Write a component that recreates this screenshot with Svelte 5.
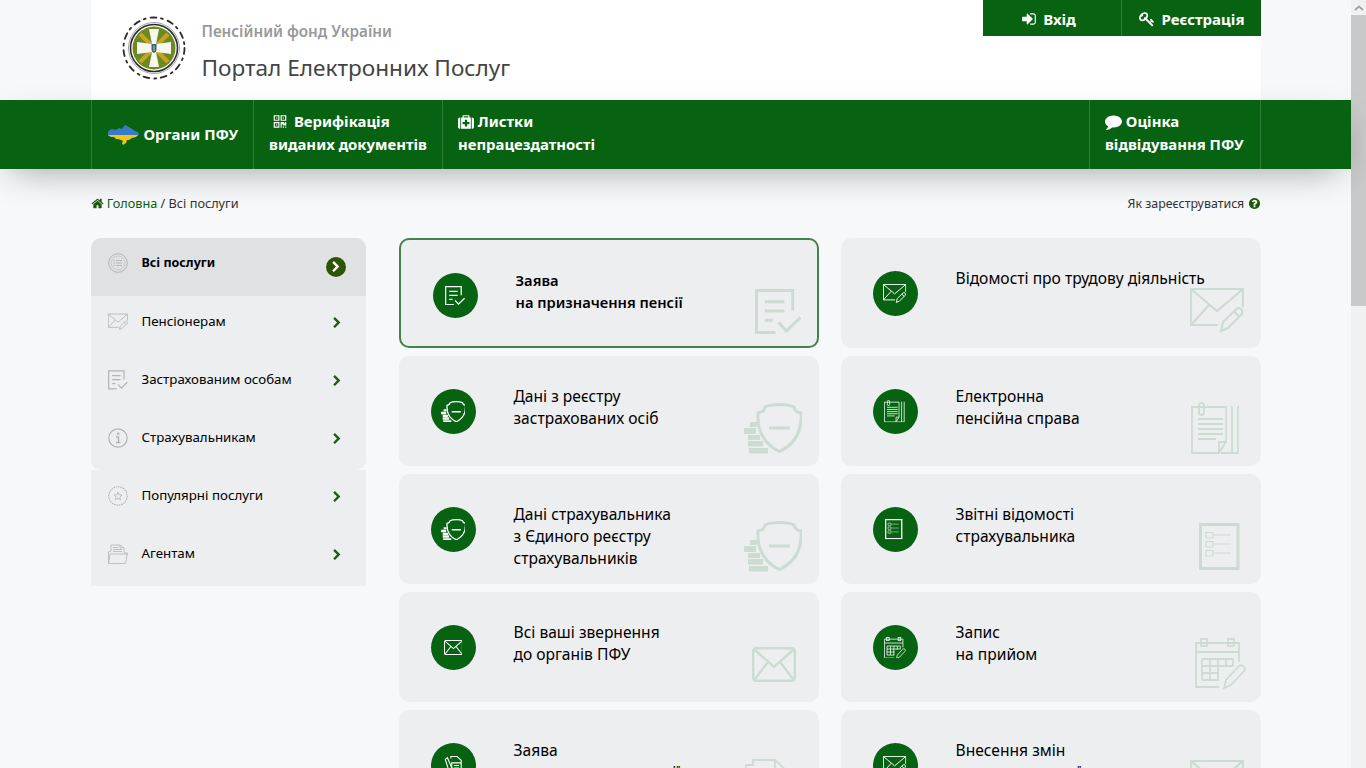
<script>
  const navItems = [
    { icon: 'map', lines: ['Органи ПФУ'], single: true },
    { icon: 'fa-qr', lines: ['Верифікація', 'виданих документів'], cls: 'qr' },
    { icon: 'fa-med', lines: ['Листки', 'непрацездатності'], cls: 'med' }
  ];

  const sideGroups = [
    [
      { icon: 'list', label: 'Всі послуги', active: true },
      { icon: 'mailpen', label: 'Пенсіонерам' },
      { icon: 'doc', label: 'Застрахованим особам' },
      { icon: 'info', label: 'Страхувальникам' }
    ],
    [
      { icon: 'star', label: 'Популярні послуги' },
      { icon: 'folder', label: 'Агентам' }
    ]
  ];

  // w/h/r/b = size of the pale icon and its distance from the card's right and bottom edge
  const cards = [
    { icon: 'doc', w: 47, h: 46, r: 15, b: 11, lines: ['Заява', 'на призначення пенсії'], active: true },
    { icon: 'mailpen', w: 54, h: 45, r: 17, b: 15, lines: ['Відомості про трудову діяльність'] },
    { icon: 'shield', w: 58, h: 51, r: 17, b: 12, lines: ['Дані з реєстру', 'застрахованих осіб'] },
    { icon: 'paper', w: 49, h: 52, r: 21, b: 12, lines: ['Електронна', 'пенсійна справа'] },
    { icon: 'shield', w: 58, h: 51, r: 17, b: 12, lines: ['Дані страхувальника', 'з Єдиного реєстру', 'страхувальників'] },
    { icon: 'check', w: 46, h: 47, r: 16, b: 14, lines: ['Звітні відомості', 'страхувальника'] },
    { icon: 'mail', w: 44, h: 35, r: 23, b: 20, lines: ['Всі ваші звернення', 'до органів ПФУ'] },
    { icon: 'cal', w: 51, h: 51, r: 15, b: 13, lines: ['Запис', 'на прийом'] },
    { icon: 'draft', badge: 'draft-badge', w: 44, h: 46, r: 30, b: 15, lines: ['Заява', 'на перерахунок пенсії'] },
    { icon: 'mailpen', w: 54, h: 45, r: 17, b: 15, lines: ['Внесення змін', 'до персональної картки'] }
  ];

  const BADGE_SCALE = 0.43;
</script>

<!-- icon sprite -->
<svg class="sprite" aria-hidden="true">
  <symbol id="fa-chevron" viewBox="0 0 1792 1792"><path fill="currentColor" d="M1363 877l-742 742q-19 19-45 19t-45-19l-166-166q-19-19-19-45t19-45l531-531-531-531q-19-19-19-45t19-45l166-166q19-19 45-19t45 19l742 742q19 19 19 45t-19 45z"/></symbol>
  <symbol id="fa-comment" viewBox="0 0 1792 1792"><path fill="currentColor" d="M1792 896q0 174-120 321.5t-326 233-450 85.5q-70 0-145-8-198 175-460 242-49 14-114 22-17 2-30.5-9t-17.5-29v-1q-3-4-.5-12t2-10 4.5-9.5l6-9 7-8.5 8-9q7-8 31-34.5t34.5-38 31-39.5 32.5-51 27-59 26-76q-157-89-247.5-220t-90.5-281q0-130 71-248.5t191-204.5 286-136.5 348-50.5q244 0 450 85.5t326 233 120 321.5z"/></symbol>
  <symbol id="fa-signin" viewBox="0 0 1792 1792"><path fill="currentColor" d="M1312 896q0 26-19 45l-544 544q-19 19-45 19t-45-19-19-45v-288h-448q-26 0-45-19t-19-45v-384q0-26 19-45t45-19h448v-288q0-26 19-45t45-19 45 19l544 544q19 19 19 45zm352-352v704q0 119-84.5 203.5t-203.5 84.5h-320q-13 0-22.5-9.5t-9.5-22.5q0-4-1-20t-.5-26.5 3-23.5 10-19.5 20.5-6.5h320q66 0 113-47t47-113v-704q0-66-47-113t-113-47h-312l-11.5-1-11.5-3-8-5.5-7-9-2-13.5q0-4-1-20t-.5-26.5 3-23.5 10-19.5 20.5-6.5h320q119 0 203.5 84.5t84.5 203.5z"/></symbol>
  <symbol id="fa-help" viewBox="0 0 1792 1792"><path fill="currentColor" d="M1024 1376v-192q0-14-9-23t-23-9h-192q-14 0-23 9t-9 23v192q0 14 9 23t23 9h192q14 0 23-9t9-23zm256-672q0-88-55.500-163t-138.500-116-170-41q-243 0-371 213-15 24 8 42l132 100q7 6 19 6 16 0 25-12 53-68 86-92 34-24 86-24 48 0 85.500 26t37.500 59q0 38-20 61t-68 45q-63 28-115.500 86.500t-52.500 125.500v36q0 14 9 23t23 9h192q14 0 23-9t9-23q0-19 21.500-49.500t54.500-49.500q32-18 49-28.500t46-35 44.500-48 28-60.500 12.500-81zm384 192q0 209-103 385.500t-279.500 279.500-385.500 103-385.500-103-279.500-279.500-103-385.500 103-385.500 279.500-279.500 385.500-103 385.500 103 279.500 279.500 103 385.500z"/></symbol>
  <symbol id="fa-home" viewBox="0 0 1792 1792"><path fill="currentColor" d="M1472 992v480q0 26-19 45t-45 19h-384v-384h-256v384h-384q-26 0-45-19t-19-45v-480q0-1 .5-3t.5-3l575-474 575 474q1 2 1 6zm223-69l-62 74q-8 9-21 11h-3q-13 0-21-7l-692-577-692 577q-12 8-24 7-13-2-21-11l-62-74q-8-10-7-23.500t11-21.500l719-599q32-26 76-26t76 26l244 204v-195q0-14 9-23t23-9h192q14 0 23 9t9 23v408l219 182q10 8 11 21.500t-7 23.500z"/></symbol>
  <symbol id="fa-key" viewBox="0 0 1792 1792"><path fill="currentColor" d="M832 512q0-80-56-136t-136-56-136 56-56 136q0 42 19 83-41-19-83-19-80 0-136 56t-56 136 56 136 136 56 136-56 56-136q0-42-19-83 41 19 83 19 80 0 136-56t56-136zm851 704q0 17-49 66t-66 49q-9 0-28.500-16t-36.500-33-38.500-40-24.500-26l-96 96 220 220q28 28 28 68 0 42-39 81t-81 39q-40 0-68-28l-671-671q-176 131-365 131-163 0-265.500-102.500t-102.500-265.500q0-160 95-313t248-248 313-95q163 0 265.500 102.500t102.500 265.500q0 189-131 365l355 355 96-96q-3-3-26-24.500t-40-38.500-33-36.500-16-28.500q0-17 49-66t66-49q13 0 23 10 6 6 46 44.500t82 79.500 86.500 86 73 78 28.500 41z"/></symbol>
  <symbol id="fa-med" viewBox="0 0 1792 1792"><path fill="currentColor" d="M1280 1120v-192q0-14-9-23t-23-9h-224v-224q0-14-9-23t-23-9h-192q-14 0-23 9t-9 23v224h-224q-14 0-23 9t-9 23v192q0 14 9 23t23 9h224v224q0 14 9 23t23 9h192q14 0 23-9t9-23v-224h224q14 0 23-9t9-23zm-640-736h512v-128h-512v128zm-384 0v1280h-32q-92 0-158-66t-66-158v-832q0-92 66-158t158-66h32zm1184 0v1280h-1088v-1280h160v-160q0-40 28-68t68-28h576q40 0 68 28t28 68v160h160zm352 224v832q0 92-66 158t-158 66h-32v-1280h32q92 0 158 66t66 158z"/></symbol>
  <symbol id="fa-qr" viewBox="0 0 1792 1792"><path fill="currentColor" d="M576 1152v128h-128v-128h128zm0-768v128h-128v-128h128zm768 0v128h-128v-128h128zm-1024 1023h384v-383h-384v383zm0-767h384v-384h-384v384zm768 0h384v-384h-384v384zm-256 256v640h-640v-640h640zm512 512v128h-128v-128h128zm256 0v128h-128v-128h128zm0-512v384h-384v-128h-128v384h-128v-640h384v128h128v-128h128zm-768-768v640h-640v-640h640zm768 0v640h-640v-640h640z"/></symbol>

  <symbol id="map" viewBox="0 0 31 23">
    <path fill="#3a7bc8" d="M0 9l3-3 5 1 3-2 3 1 3-4 4 2 3 2 3 2 3 1 1 3-2 1H0z"/>
    <path fill="#f2c618" d="M0 12h30l-2 2-4 1-3 2-2 0-1 3-3 2-1-2 1-2-2-1-3-1-2 0-2-2-3 0z"/>
  </symbol>

  <!-- line icons, drawn with currentColor so they work white, grey and pale green -->
  <symbol id="doc" viewBox="0 0 48 47">
    <g fill="none" stroke="currentColor" stroke-width="3">
      <path d="M21 44.500H1.500V1.500H38.500V22"/>
      <path d="M10 13H30M10 22.500H30M10 32H18"/>
      <path d="M24 34L32 43L46.500 29"/>
    </g>
  </symbol>
  <symbol id="mailpen" viewBox="0 0 54 45">
    <g fill="none" stroke="currentColor" stroke-width="2.200">
      <path d="M28 37H1V1H53V19"/>
      <path d="M1 1L27 23L53 1M1 37L19 17"/>
      <path d="M31 43L33 34L47 20.500Q49 19 51 21T52 26L38 40Z"/>
      <path d="M44 23.500L49.500 29"/>
    </g>
  </symbol>
  <symbol id="shield" viewBox="0 0 58 51">
    <g fill="none" stroke="currentColor" stroke-width="3">
      <path d="M35.500 1.500C42 1.500 48 3 50 4C50.500 7 53 9.500 57 10C58 25 53 40 35.500 48.500C18 40 13 25 14 10C18 9.500 20.500 7 21 4C23 3 29 1.500 35.500 1.500Z"/>
      <path d="M25 25H46"/>
    </g>
    <path fill="currentColor" d="M6 19H13V24H6ZM0 25H12V31H0ZM4 32H16V37H4ZM4 38H19V43.500H4ZM5 45H24V50.500H5Z"/>
  </symbol>
  <symbol id="paper" viewBox="0 0 49 52">
    <g fill="none" stroke="currentColor" stroke-width="1.800">
      <path d="M1 5H35V40L28 51H1Z"/>
      <path d="M28 51V40H35"/>
      <path d="M41 4V51H30M47 4V51H41"/>
      <path d="M8 10V3Q8 1 10.500 1T13 3V10Q13 13 10.500 13T8 10"/>
      <path d="M7 17H32M7 22H32M7 27H32M7 32H32M7 37H25"/>
    </g>
  </symbol>
  <symbol id="check" viewBox="0 0 46 47">
    <g fill="none" stroke="currentColor">
      <path stroke-width="3" d="M1.500 45.500V1.500H39V45.500Z"/>
      <path stroke-width="1.200" d="M7 9.500H14V15H7ZM7 18.500H14V24H7ZM7 27.500H14V33H7Z"/>
      <path stroke-width="1" d="M15 12H32M15 21H32M15 30H32"/>
    </g>
  </symbol>
  <symbol id="mail" viewBox="0 0 44 35">
    <g fill="none" stroke="currentColor" stroke-width="2.400">
      <rect x="1.200" y="1.200" width="41.600" height="32.600" rx="3"/>
      <path d="M3 3L22 20L41 3M3 32L16 15M41 32L28 15"/>
    </g>
  </symbol>
  <symbol id="cal" viewBox="0 0 51 51">
    <g fill="none" stroke="currentColor" stroke-width="1.800">
      <path d="M24 49H1V5H44V24"/>
      <path d="M1 14H44"/>
      <rect x="6" y="1" width="6" height="7"/>
      <rect x="33" y="1" width="6" height="7"/>
      <path d="M7 21H31M7 28H38M7 35H24M7 42H24M15 21V42M23 21V42M31 21V29M38 21V28M7 21V42M38 21H31"/>
      <path d="M29 50L31 42L44 28Q46 26 48.500 28.500T49 33L36 47Z"/>
    </g>
  </symbol>
  <symbol id="draft" viewBox="0 0 44 46">
    <g fill="none" stroke="currentColor" stroke-width="1.800">
      <path d="M1 6H8V1H30L42 12V45H1Z"/>
      <path d="M30 1V12H42"/>
    </g>
  </symbol>
  <symbol id="draft-badge" viewBox="0 0 44 46">
    <g fill="none" stroke="currentColor" stroke-width="2.600">
      <path d="M16 6V1H30L40 10V45H18V16H40"/>
      <path d="M23 22H35M23 28H35M23 34H35"/>
      <path d="M3 8L8 4L20 32L20 42L12 36Z"/>
    </g>
  </symbol>
  <symbol id="list" viewBox="0 0 20 20">
    <g fill="none" stroke="currentColor">
      <circle cx="10" cy="10" r="9.300" stroke-width="1"/>
      <circle cx="10" cy="10" r="7" stroke-width=".5"/>
      <path d="M8 7.500H14M8 10H14M8 12.500H14M5.500 7.500H7M5.500 10H7M5.500 12.500H7" stroke-width=".9"/>
    </g>
  </symbol>
  <symbol id="info" viewBox="0 0 20 20">
    <g fill="none" stroke="currentColor">
      <circle cx="10" cy="10" r="9.200" stroke-width="1.200"/>
      <path d="M8 9H10.500V14.500M8 14.500H12.500" stroke-width="1.400"/>
      <path d="M9.500 5H11V6.500H9.500Z" stroke-width="1"/>
    </g>
  </symbol>
  <symbol id="star" viewBox="0 0 20 20">
    <g fill="none" stroke="currentColor">
      <circle cx="10" cy="10" r="9.200" stroke-width="1.100" stroke-dasharray="1.600 .8"/>
      <path d="M10 6L11.200 8.800L14 9L11.900 10.900L12.500 13.800L10 12.300L7.500 13.800L8.100 10.900L6 9L8.800 8.800Z" stroke-width=".8"/>
    </g>
  </symbol>
  <symbol id="folder" viewBox="0 0 20 20">
    <g fill="none" stroke="currentColor" stroke-width=".8">
      <path d="M.5 19.500V8L3 7V1H12L16 4V9H19.500L17.500 19.500Z"/>
      <path d="M.5 19.500L2 10H19.500M12 1V4H16M5 3.500H10M5 5.500H14M5 7.500H14"/>
    </g>
  </symbol>
</svg>

<div class="shell">
  <div class="page">
    <header class="header">
      <div class="brand">
        <svg class="logo" viewBox="0 0 66 66" aria-hidden="true">
          <g fill="none" stroke="#2b2b2b" stroke-linecap="round">
            <circle cx="33" cy="33" r="30.500" stroke-width="1.800" stroke-dasharray="6 4.500 2 5"/>
            <circle cx="33" cy="33" r="23.500" stroke-width="1.600"/>
            <circle cx="33" cy="33" r="25.500" stroke-width=".8" stroke="#8a8a8a"/>
          </g>
          <circle cx="33" cy="33" r="21.500" fill="#6d8a1f"/>
          <path d="M19 19L47 47M47 19L19 47" stroke="#c9a227" stroke-width="4"/>
          <path fill="#f7f6ef" d="M28 14H38L35 29L50 27V39L35 37L38 52H28L31 37L16 39V27L31 29Z"/>
          <path fill="#2f5f9e" d="M30.500 29H35.500V35Q35.500 37 33 38Q30.500 37 30.500 35Z"/>
          <path fill="#e0c030" d="M32.400 30.500H33.600V36H32.400Z"/>
        </svg>
        <div class="brand-text">
          <span class="org">Пенсійний фонд України</span>
          <span class="portal">Портал Електронних Послуг</span>
        </div>
      </div>
      <div class="auth">
        <a class="auth-link login"><svg class="fa"><use href="#fa-signin"/></svg> Вхід</a>
        <a class="auth-link register"><svg class="fa"><use href="#fa-key"/></svg> Реєстрація</a>
      </div>
    </header>

    <nav class="nav">
      <div class="nav-inner">
        {#each navItems as item}
          <a class="nav-item" class:single={item.single}>
            {#if item.single}
              <svg class="map"><use href="#map"/></svg>
              <span>{item.lines[0]}</span>
            {:else}
              <span class="nav-line"><svg class="fa {item.cls}"><use href={'#' + item.icon}/></svg> {item.lines[0]}</span>
              <span class="nav-line">{item.lines[1]}</span>
            {/if}
          </a>
        {/each}
        <a class="nav-item last">
          <span class="nav-line"><svg class="fa comment"><use href="#fa-comment"/></svg> Оцінка</span>
          <span class="nav-line">відвідування ПФУ</span>
        </a>
      </div>
    </nav>

    <div class="content">
      <div class="crumbs">
        <div>
          <svg class="fa home"><use href="#fa-home"/></svg>
          <a class="crumb-home">Головна</a> / Всі послуги
        </div>
        <div class="howto">Як зареєструватися <svg class="fa help"><use href="#fa-help"/></svg></div>
      </div>

      <div class="columns">
        <aside class="sidebar">
          {#each sideGroups as group, g}
            <ul class="side-group" class:first={g === 0}>
              {#each group as item}
                <li class="side-item" class:active={item.active}>
                  <svg class="side-icon"><use href={'#' + item.icon}/></svg>
                  <span class="side-label">{item.label}</span>
                  <span class="side-arrow"><svg><use href="#fa-chevron"/></svg></span>
                </li>
              {/each}
            </ul>
          {/each}
        </aside>

        <main class="cards">
          {#each cards as card}
            <a class="card" class:active={card.active}>
              <span class="badge">
                <svg style="width:{card.w * BADGE_SCALE}px;height:{card.h * BADGE_SCALE}px"><use href={'#' + (card.badge ?? card.icon)}/></svg>
              </span>
              <span class="card-text">
                {#each card.lines as line}
                  <span class="card-line">{line}</span>
                {/each}
              </span>
              <svg class="ghost" style="width:{card.w}px;height:{card.h}px;right:{card.r}px;bottom:{card.b}px"><use href={'#' + card.icon}/></svg>
            </a>
          {/each}
        </main>
      </div>
    </div>
  </div>

  <!-- screenshot shows a classic scrollbar -->
  <div class="scrollbar">
    <div class="sb-arrow">
      <svg viewBox="0 0 10 6"><path d="M1 5L5 1.500L9 5" fill="none" stroke="#a3a3a3" stroke-width="1.800"/></svg>
    </div>
    <div class="sb-thumb"></div>
  </div>
</div>

<style>
  :global(body) {
    margin: 0;
    background: #f7f8fa;
    font-family: "Noto Sans", "Open Sans", sans-serif;
    color: #000;
  }

  .sprite {
    display: none;
  }

  .shell {
    display: flex;
    height: 100vh;
    overflow: hidden;
  }

  .page {
    flex: 1;
    min-width: 0;
  }

  .scrollbar {
    width: 15px;
    background: #f1f1f1;
    flex-shrink: 0;
  }

  .sb-arrow {
    height: 15px;
    display: flex;
    align-items: center;
    justify-content: center;
  }

  .sb-arrow svg {
    width: 10px;
    height: 6px;
  }

  .sb-thumb {
    height: 291px;
    background: #c9c9c9;
  }

  .fa {
    width: 16px;
    height: 16px;
    fill: currentColor;
    vertical-align: -3px;
  }

  /* Header */
  .header {
    width: 1170px;
    height: 100px;
    margin: 0 auto;
    background: #fff;
    display: flex;
    justify-content: space-between;
    align-items: flex-start;
  }

  .brand {
    display: flex;
    padding: 15px 0 0 30px;
  }

  .logo {
    width: 66px;
    height: 66px;
  }

  .brand-text {
    display: flex;
    flex-direction: column;
    margin-left: 15px;
  }

  .org {
    font-size: 15.200px;
    font-weight: 600;
    line-height: 20px;
    margin-top: 6px;
    color: #999;
  }

  .portal {
    font-size: 22.600px;
    line-height: 30px;
    margin-top: 12px;
    color: #444;
  }

  .auth {
    display: flex;
    background: #076312;
    height: 36px;
    color: #fff;
    font-weight: 700;
    font-size: 15px;
  }

  .auth-link {
    display: flex;
    align-items: center;
    justify-content: center;
    gap: 6px;
    padding-top: 1px;
  }

  .login {
    box-sizing: border-box;
    width: 138px;
    padding-right: 6px;
  }

  .register {
    box-sizing: border-box;
    width: 140px;
    padding-left: 2px;
    border-left: 1px solid #2f7d38;
  }

  /* Green nav */
  .nav {
    position: relative;
    background: #076312;
    box-shadow: 0 12px 36px -12px rgba(0, 0, 0, 0.38);
  }

  .nav-inner {
    width: 1170px;
    height: 69px;
    margin: 0 auto;
    display: flex;
  }

  .nav-item {
    display: flex;
    flex-direction: column;
    justify-content: center;
    padding: 0 15px 4px;
    border-left: 1px solid #2f7d38;
    color: #fff;
    font-size: 14.900px;
    font-weight: 700;
    line-height: 23px;
  }

  .nav-item.single {
    flex-direction: row;
    align-items: center;
    gap: 5px;
    padding: 0 15px 0 16px;
  }

  .nav-line {
    white-space: nowrap;
  }

  .map {
    width: 31px;
    height: 23px;
  }

  .nav-item.last {
    margin-left: auto;
    padding-right: 16px;
    border-right: 1px solid #2f7d38;
  }

  .qr {
    margin-left: 3px;
    margin-right: 2px;
  }

  .comment {
    width: 17px;
    height: 17px;
    vertical-align: -3px;
  }

  /* Content */
  .content {
    width: 1170px;
    margin: 0 auto;
  }

  .crumbs {
    display: flex;
    justify-content: space-between;
    align-items: center;
    height: 18px;
    margin-top: 25px;
    font-size: 12.700px;
    color: #333;
  }

  .howto {
    font-size: 12.400px;
  }

  .crumb-home {
    color: #076312;
  }

  .home,
  .help {
    width: 13px;
    height: 13px;
    color: #1d5a0a;
    vertical-align: -2px;
  }

  .columns {
    display: flex;
    align-items: flex-start;
    margin-top: 26px;
  }

  /* Sidebar */
  .sidebar {
    width: 275px;
    flex-shrink: 0;
    margin-right: 33px;
  }

  .side-group {
    list-style: none;
    margin: 0;
    padding: 0;
    background: #edeef0;
  }

  .side-group.first {
    border-radius: 10px;
    overflow: hidden;
  }

  .side-item {
    height: 58px;
    box-sizing: border-box;
    padding: 16px 20px 0 17px;
    display: flex;
    align-items: flex-start;
    font-size: 13.300px;
    line-height: 18px;
  }

  .side-item.active {
    background: #e0e1e3;
    font-weight: 700;
    font-size: 12.500px;
    padding-top: 15px;
  }

  .side-icon {
    width: 20px;
    height: 20px;
    color: #b4b4b4;
    flex-shrink: 0;
    margin-right: 14px;
  }

  .side-label {
    flex: 1;
  }

  .active .side-label {
    margin-top: 1px;
  }

  .side-arrow {
    width: 20px;
    height: 20px;
    margin-top: 1px;
    display: flex;
    align-items: center;
    justify-content: center;
    color: #1f6010;
  }

  .side-arrow svg {
    width: 12px;
    height: 12px;
    margin-left: 3px;
  }

  .active .side-arrow {
    background: #2d5500;
    border-radius: 50%;
    color: #fff;
    margin-top: 4px;
  }

  .active .side-arrow svg {
    margin-left: 1px;
  }

  /* Cards */
  .cards {
    display: grid;
    grid-template-columns: 420px 420px;
    grid-auto-rows: 110px;
    gap: 8px 22px;
    flex: 1;
  }

  .card {
    position: relative;
    display: flex;
    box-sizing: border-box;
    padding: 30px 20px 0 32px;
    background: #edeef0;
    border-radius: 10px;
    overflow: hidden;
  }

  .card.active {
    border: 2px solid #44824c;
    font-weight: 600;
  }

  .badge {
    width: 45px;
    height: 45px;
    margin-top: 3px;
    border-radius: 50%;
    background: #076312;
    color: #fff;
    display: flex;
    align-items: center;
    justify-content: center;
    flex-shrink: 0;
  }

  .card-text {
    margin: -1px 0 0 38px;
    display: flex;
    flex-direction: column;
    font-size: 15.600px;
    line-height: 22px;
  }

  .active .card-text {
    font-size: 14.700px;
  }

  .ghost {
    position: absolute;
    color: #cddcd2;
  }
</style>
